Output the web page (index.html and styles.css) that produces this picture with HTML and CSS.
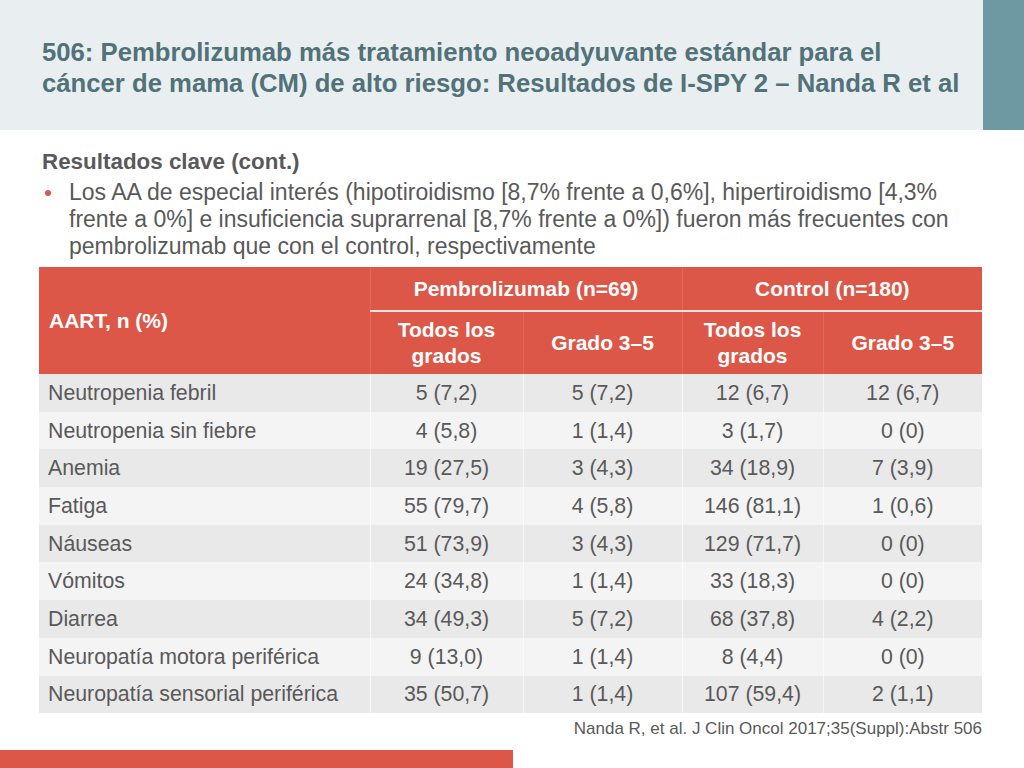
FILE: index.html
```html
<!DOCTYPE html>
<html lang="es">
<head>
<meta charset="utf-8">
<title>506: Pembrolizumab</title>
<link rel="stylesheet" href="styles.css">
</head>
<body>
<div class="slide">
  <header class="header">
    <h1 class="title">506: Pembrolizumab más tratamiento neoadyuvante estándar para el<br>cáncer de mama (CM) de alto riesgo: Resultados de I-SPY 2 – Nanda R et al</h1>
    <div class="accent"></div>
  </header>
  <main class="content">
    <h2 class="subtitle">Resultados clave (cont.)</h2>
    <ul class="bullets">
      <li>Los AA de especial interés (hipotiroidismo [8,7% frente a 0,6%], hipertiroidismo [4,3%<br>frente a 0%] e insuficiencia suprarrenal [8,7% frente a 0%]) fueron más frecuentes con<br>pembrolizumab que con el control, respectivamente</li>
    </ul>
    <table class="data">
      <colgroup>
        <col class="c1"><col class="c2"><col class="c3"><col class="c4"><col class="c5">
      </colgroup>
      <thead>
        <tr class="h1row">
          <th rowspan="2" class="first">AART, n (%)</th>
          <th colspan="2" class="group">Pembrolizumab (n=69)</th>
          <th colspan="2" class="group">Control (n=180)</th>
        </tr>
        <tr class="h2row">
          <th>Todos los<br>grados</th>
          <th>Grado 3–5</th>
          <th>Todos los<br>grados</th>
          <th>Grado 3–5</th>
        </tr>
      </thead>
      <tbody>
        <tr><td>Neutropenia febril</td><td>5 (7,2)</td><td>5 (7,2)</td><td>12 (6,7)</td><td>12 (6,7)</td></tr>
        <tr><td>Neutropenia sin fiebre</td><td>4 (5,8)</td><td>1 (1,4)</td><td>3 (1,7)</td><td>0 (0)</td></tr>
        <tr><td>Anemia</td><td>19 (27,5)</td><td>3 (4,3)</td><td>34 (18,9)</td><td>7 (3,9)</td></tr>
        <tr><td>Fatiga</td><td>55 (79,7)</td><td>4 (5,8)</td><td>146 (81,1)</td><td>1 (0,6)</td></tr>
        <tr><td>Náuseas</td><td>51 (73,9)</td><td>3 (4,3)</td><td>129 (71,7)</td><td>0 (0)</td></tr>
        <tr><td>Vómitos</td><td>24 (34,8)</td><td>1 (1,4)</td><td>33 (18,3)</td><td>0 (0)</td></tr>
        <tr><td>Diarrea</td><td>34 (49,3)</td><td>5 (7,2)</td><td>68 (37,8)</td><td>4 (2,2)</td></tr>
        <tr><td>Neuropatía motora periférica</td><td>9 (13,0)</td><td>1 (1,4)</td><td>8 (4,4)</td><td>0 (0)</td></tr>
        <tr><td>Neuropatía sensorial periférica</td><td>35 (50,7)</td><td>1 (1,4)</td><td>107 (59,4)</td><td>2 (1,1)</td></tr>
      </tbody>
    </table>
    <p class="cite">Nanda R, et al. J Clin Oncol 2017;35(Suppl):Abstr 506</p>
  </main>
  <footer class="footer">
    <div class="redbar"></div>
  </footer>
</div>
</body>
</html>
```

FILE: styles.css
```css
* { box-sizing: border-box; }
html, body { margin: 0; padding: 0; }
body {
  width: 1024px;
  height: 768px;
  overflow: hidden;
  background: #ffffff;
  font-family: "Liberation Sans", Arial, sans-serif;
  color: #595959;
}
.slide {
  width: 1024px;
  height: 768px;
  display: flex;
  flex-direction: column;
}
.header {
  height: 130px;
  flex-shrink: 0;
  display: flex;
  background: #e9eef1;
}
.title {
  flex: 1;
  min-width: 0;
  margin: 0;
  padding: 37px 0 0 42px;
  font-size: 25.7px;
  line-height: 31px;
  font-weight: bold;
  color: #517278;
  white-space: nowrap;
}
.accent {
  flex: 0 0 41px;
  background: #6f99a2;
}
.content {
  padding: 0 42px 0 39px;
  display: flex;
  flex-direction: column;
}
.subtitle {
  margin: 19px 0 0 3px;
  font-size: 22.4px;
  line-height: 26px;
  font-weight: bold;
  color: #595959;
}
.bullets {
  margin: 3.5px 0 0 3px;
  padding: 0 0 0 27px;
  list-style: none;
}
.bullets li {
  position: relative;
  font-size: 23px;
  line-height: 27px;
  color: #595959;
  white-space: nowrap;
}
.bullets li::before {
  content: "";
  position: absolute;
  left: -24px;
  top: 11px;
  width: 6px;
  height: 6px;
  border-radius: 50%;
  background: #d9574a;
}
.data {
  margin-top: 7.5px;
  width: 943px;
  border-collapse: collapse;
  table-layout: fixed;
  font-size: 21.3px;
}
.c1 { width: 331px; }
.c2 { width: 153px; }
.c3 { width: 159px; }
.c4 { width: 141px; }
.c5 { width: 159px; }
.data th {
  background: #dc5747;
  color: #ffffff;
  font-weight: bold;
  font-size: 21px;
  text-align: center;
  line-height: 26px;
  padding: 0 2px;
  border-left: 1px solid #e0685a;
}
.data th.first {
  text-align: left;
  padding-left: 10px;
  border-left: none;
}
.h1row { height: 44px; }
.h2row { height: 63px; }
.data th.group {
  border-bottom: 2px solid #f3e2de;
}
.data td {
  height: 37.7px;
  padding: 0 2px;
  text-align: center;
  color: #595959;
  line-height: 24px;
  border-left: 1px solid rgba(255,255,255,0.6);
}
.data td:first-child {
  text-align: left;
  padding-left: 9px;
  border-left: none;
  white-space: nowrap;
}
.data tbody tr:nth-child(odd) td { background: #e9e9e9; }
.data tbody tr:nth-child(even) td { background: #f4f4f4; }
.cite {
  margin: 6px 0 0;
  text-align: right;
  font-size: 17px;
  line-height: 20px;
  color: #595959;
}
.footer {
  margin-top: auto;
  height: 18px;
  flex-shrink: 0;
}
.redbar {
  width: 513px;
  height: 18px;
  background: #dc5747;
}
```
